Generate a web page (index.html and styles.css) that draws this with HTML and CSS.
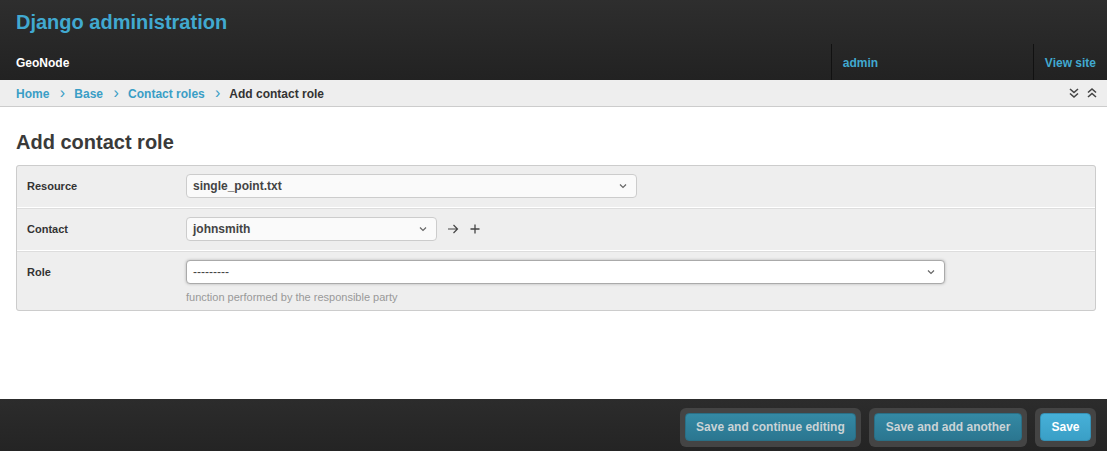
FILE: index.html
```html
<!DOCTYPE html>
<html lang="en">
<head>
  <meta charset="UTF-8">
  <title>Add contact role | Django site admin</title>
  <link rel="stylesheet" href="styles.css">
</head>
<body>

<div id="header">
  <div class="branding">
    <h1 id="site-name"><a href="#">Django administration</a></h1>
  </div>
  <div class="nav-row">
    <div class="brand">GeoNode</div>
    <div class="nav-item user"><a href="#">admin</a></div>
    <div class="nav-item"><a href="#">View site</a></div>
  </div>
</div>

<div class="breadcrumbs">
  <div class="crumbs">
    <a href="#">Home</a>
    <span class="sep">&rsaquo;</span>
    <a href="#">Base</a>
    <span class="sep">&rsaquo;</span>
    <a href="#">Contact roles</a>
    <span class="sep">&rsaquo;</span>
    <span class="current">Add contact role</span>
  </div>
  <div class="toggles">
    <svg width="12" height="12" viewBox="0 0 12 12"><path d="M2 2 L6 5.5 L10 2 M2 6.5 L6 10 L10 6.5" fill="none" stroke="#444" stroke-width="1.6"/></svg>
    <svg width="12" height="12" viewBox="0 0 12 12"><path d="M2 5.5 L6 2 L10 5.5 M2 10 L6 6.5 L10 10" fill="none" stroke="#444" stroke-width="1.6"/></svg>
  </div>
</div>

<div id="content">
  <h1 class="title">Add contact role</h1>

  <fieldset class="module">
    <div class="form-row">
      <label>Resource</label>
      <div class="field">
        <div class="select resource">
          <span>single_point.txt</span>
          <svg width="8" height="6" viewBox="0 0 8 6"><path d="M1 1.5 L4 4.5 L7 1.5" fill="none" stroke="#666" stroke-width="1.2"/></svg>
        </div>
      </div>
    </div>
    <div class="form-row">
      <label>Contact</label>
      <div class="field inline">
        <div class="select contact">
          <span>johnsmith</span>
          <svg width="8" height="6" viewBox="0 0 8 6"><path d="M1 1.5 L4 4.5 L7 1.5" fill="none" stroke="#666" stroke-width="1.2"/></svg>
        </div>
        <a class="related" href="#" title="Change selected contact">
          <svg width="12" height="12" viewBox="0 0 12 12"><path d="M1 6 H10.5 M6.5 2 L10.5 6 L6.5 10" fill="none" stroke="#444" stroke-width="1.2"/></svg>
        </a>
        <a class="related" href="#" title="Add another contact">
          <svg width="12" height="12" viewBox="0 0 12 12"><path d="M6 1.5 V10.5 M1.5 6 H10.5" fill="none" stroke="#444" stroke-width="1.3"/></svg>
        </a>
      </div>
    </div>
    <div class="form-row last">
      <label>Role</label>
      <div class="field">
        <div class="select role">
          <span>---------</span>
          <svg width="8" height="6" viewBox="0 0 8 6"><path d="M1 1.5 L4 4.5 L7 1.5" fill="none" stroke="#666" stroke-width="1.2"/></svg>
        </div>
        <div class="help">function performed by the responsible party</div>
      </div>
    </div>
  </fieldset>
</div>

<div class="submit-row">
  <div class="btn-wrap"><button class="btn">Save and continue editing</button></div>
  <div class="btn-wrap"><button class="btn">Save and add another</button></div>
  <div class="btn-wrap"><button class="btn default">Save</button></div>
</div>

</body>
</html>
```

FILE: styles.css
```css
/* admin page */

* {
    box-sizing: border-box;
}

body {
    margin: 0;
    height: 100vh;
    display: flex;
    flex-direction: column;
    font-family: "Liberation Sans", Arial, sans-serif;
    color: #333;
    background: #fff;
}

a {
    text-decoration: none;
    color: #41a9d0;
}

#header {
    background: linear-gradient(#2e2e2e, #222);
}

.branding {
    height: 44px;
    padding: 0 16px;
    display: flex;
    align-items: center;
}

#site-name {
    margin: 0;
    font-size: 20px;
    font-weight: bold;
}

#site-name a {
    color: #41a9d0;
}

.nav-row {
    height: 36px;
    display: flex;
}

.brand {
    flex: 1;
    padding: 0 16px;
    display: flex;
    align-items: center;
    color: #fff;
    font-size: 12px;
    font-weight: bold;
    padding-top: 1px;
}

.nav-item {
    display: flex;
    align-items: center;
    padding: 1px 11px 0;
    border-left: 1px solid #111;
    font-size: 12px;
    font-weight: bold;
}

.nav-item.user {
    width: 202px;
}

.breadcrumbs {
    height: 27px;
    padding: 0 9px 0 16px;
    background: #eee;
    border-bottom: 1px solid #ccc;
    display: flex;
    align-items: center;
    font-size: 12px;
    font-weight: bold;
}

.crumbs {
    flex: 1;
}

.crumbs a {
    color: #3a9ec6;
}

.crumbs .sep {
    color: #3a9ec6;
    font-size: 16px;
    margin: 0 6px 0 7px;
    font-weight: normal;
}

.crumbs .current {
    color: #333;
}

.toggles {
    display: flex;
    gap: 6px;
}

#content {
    flex: 1;
    padding: 0 11px 0 16px;
}

.title {
    margin: 24px 0 11px;
    font-size: 20px;
    font-weight: bold;
    color: #3a3a3a;
}

fieldset.module {
    margin: 0;
    padding: 0;
    border: 1px solid #ccc;
    border-radius: 3px;
    background: #eee;
}

.form-row {
    display: flex;
    padding: 8px 10px 9px;
    border-bottom: 1px solid #fff;
    box-shadow: 0 1px 0 #ddd;
    margin-bottom: 1px;
}

.form-row.last {
    border-bottom: none;
    box-shadow: none;
    margin-bottom: 0;
    padding-bottom: 7px;
}

.form-row label {
    width: 159px;
    flex-shrink: 0;
    font-size: 11px;
    font-weight: bold;
    color: #333;
    padding-top: 6px;
}

.field.inline {
    display: flex;
    align-items: center;
}

.select {
    height: 24px;
    display: flex;
    align-items: center;
    justify-content: space-between;
    padding: 0 9px 0 6px;
    background: #fafafa;
    border: 1px solid #ccc;
    border-radius: 4px;
    font-size: 12px;
    font-weight: bold;
    color: #444;
}

.select.resource {
    width: 451px;
}

.select.contact {
    width: 251px;
}

.select.role {
    width: 759px;
    background: #fff;
    border-color: #aaa;
    box-shadow: 0 0 3px rgba(0, 0, 0, 0.25);
    font-weight: normal;
}

.related {
    display: flex;
    margin-left: 10px;
}

.help {
    margin-top: 7px;
    font-size: 11px;
    color: #999;
}

.submit-row {
    height: 52px;
    padding: 9px 11px 0;
    background: linear-gradient(#2c2c2c, #242424);
    display: flex;
    justify-content: flex-end;
    align-items: flex-start;
    gap: 8px;
}

.btn-wrap {
    padding: 5px 5px 6px;
    background: #444;
    border-radius: 6px;
}

.btn {
    display: block;
    height: 28px;
    padding: 0 10.5px;
    border: 1px solid #2a6f85;
    border-radius: 4px;
    background: linear-gradient(#3489a4, #2b7690);
    color: #c9d3d6;
    font-family: "Liberation Sans", Arial, sans-serif;
    font-size: 12px;
    font-weight: bold;
    cursor: pointer;
}

.btn.default {
    background: linear-gradient(#46b0d8, #3a9fc6);
    border-color: #3591b6;
    color: #fff;
}
```
